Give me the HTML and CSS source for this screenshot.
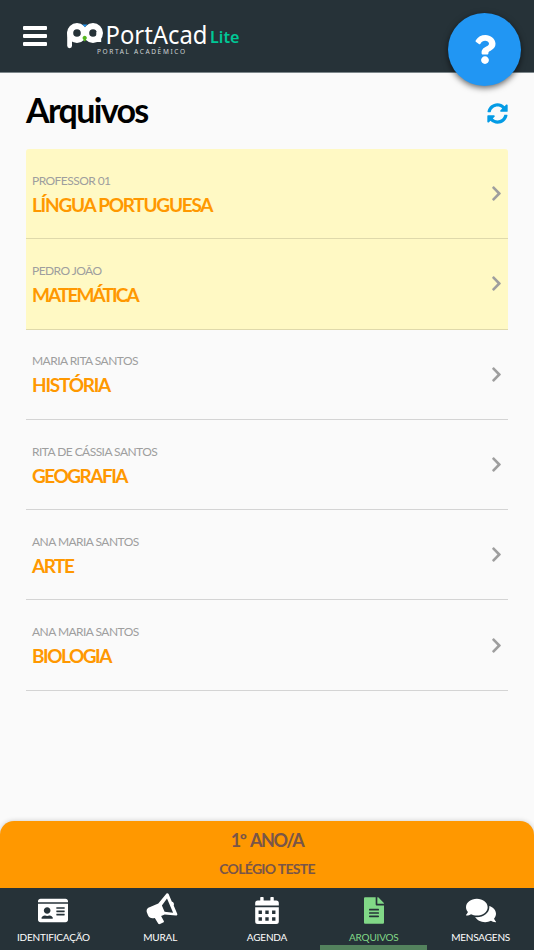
FILE: index.html
```
<!DOCTYPE html>
<html lang="pt-br">
<head>
<meta charset="utf-8">
<meta name="viewport" content="width=device-width, initial-scale=1.0">
<title>PortAcad Lite - Arquivos</title>
<link rel="stylesheet" href="styles.css">
</head>
<body>
<svg class="sprite" width="0" height="0">
  <symbol id="chevron" viewBox="0 0 320 512"><path d="M285.476 272.971L91.132 467.314c-9.373 9.373-24.569 9.373-33.941 0l-22.667-22.667c-9.357-9.357-9.375-24.522-.04-33.901L188.505 256 34.484 101.255c-9.335-9.379-9.317-24.544.04-33.901l22.667-22.667c9.373-9.373 24.569-9.373 33.941 0L285.475 239.03c9.373 9.372 9.373 24.568.001 33.941z"/></symbol>
</svg>

<header class="topbar">
  <svg class="menu" viewBox="0 0 24 20"><rect width="24" height="4" rx="1"/><rect y="8" width="24" height="4" rx="1"/><rect y="16" width="24" height="4" rx="1"/></svg>
  <svg class="logo" viewBox="0 0 176 36">
    <g fill="none" stroke="#fff" stroke-width="6.200">
      <circle cx="10" cy="12" r="6.900"/>
      <circle cx="26" cy="12" r="6.900"/>
      <path d="M2.600 12v12.800" stroke-width="4.800" stroke-linecap="round"/>
      <path d="M31.800 11v10" stroke-width="4.800"/>
    </g>
    <path d="M15.300 3.500h5l-2.500 2.500z" fill="#2196f3"/>
    <path d="M17.700 14.800a2.200 2.200 0 0 1 1.200 4l-.5 1.400h-1.400l-.5-1.400a2.200 2.200 0 0 1 1.200-4z" fill="#55b51f"/>
    <text class="logo-name" x="38.500" y="22.700" textLength="102" lengthAdjust="spacingAndGlyphs">PortAcad</text>
    <text class="logo-lite" x="143" y="22" textLength="29.500" lengthAdjust="spacingAndGlyphs">Lite</text>
    <text class="logo-sub" x="30" y="32.500" textLength="88">PORTAL ACADÊMICO</text>
  </svg>
  <button class="help" aria-label="Ajuda">
    <svg viewBox="0 0 384 512"><path d="M202.021 0C122.202 0 70.503 32.703 29.914 91.026c-7.363 10.580-5.093 25.086 5.178 32.874l43.138 32.709c10.373 7.865 25.132 6.026 33.253-4.148 25.049-31.381 43.630-49.449 82.757-49.449 30.764 0 68.816 19.799 68.816 49.631 0 22.552-18.617 34.134-48.993 51.164-35.423 19.860-82.299 44.576-82.299 106.405V320c0 13.255 10.745 24 24 24h72.471c13.255 0 24-10.745 24-24v-5.773c0-42.860 125.268-44.645 125.268-160.627C377.504 66.256 286.902 0 202.021 0zM192 373.459c-38.196 0-69.271 31.075-69.271 69.271 0 38.195 31.075 69.270 69.271 69.270s69.271-31.075 69.271-69.271-31.075-69.270-69.271-69.270z"/></svg>
  </button>
</header>

<main>
  <div class="title-row">
    <h1>Arquivos</h1>
    <svg class="refresh" viewBox="0 0 512 512"><path d="M370.720 133.280C339.458 104.008 298.888 87.962 255.848 88c-77.458.068-144.328 53.178-162.791 126.850-1.344 5.363-6.122 9.150-11.651 9.150H24.103c-7.498 0-13.194-6.807-11.807-14.176C33.933 94.924 134.813 8 256 8c66.448 0 126.791 26.136 171.315 68.685L463.030 40.970C478.149 25.851 504 36.559 504 57.941V192c0 13.255-10.745 24-24 24H345.941c-21.382 0-32.090-25.851-16.971-40.971l41.750-41.749zM32 296h134.059c21.382 0 32.090 25.851 16.971 40.971l-41.750 41.750c31.262 29.273 71.835 45.319 114.876 45.280 77.418-.070 144.315-53.144 162.787-126.849 1.344-5.363 6.122-9.150 11.651-9.150h57.304c7.498 0 13.194 6.807 11.807 14.176C478.067 417.076 377.187 504 256 504c-66.448 0-126.791-26.136-171.315-68.685L48.970 471.030C33.851 486.149 8 475.441 8 454.059V320c0-13.255 10.745-24 24-24z"/></svg>
  </div>

  <div class="list">
    <a class="item new"><div><p class="teacher">PROFESSOR 01</p><h2>LÍNGUA PORTUGUESA</h2></div><svg><use href="#chevron"/></svg></a>
    <a class="item new"><div><p class="teacher">PEDRO JOÃO</p><h2 class="tight">MATEMÁTICA</h2></div><svg><use href="#chevron"/></svg></a>
    <a class="item"><div><p class="teacher">MARIA RITA SANTOS</p><h2>HISTÓRIA</h2></div><svg><use href="#chevron"/></svg></a>
    <a class="item"><div><p class="teacher">RITA DE CÁSSIA SANTOS</p><h2 class="snug">GEOGRAFIA</h2></div><svg><use href="#chevron"/></svg></a>
    <a class="item"><div><p class="teacher">ANA MARIA SANTOS</p><h2 class="snug">ARTE</h2></div><svg><use href="#chevron"/></svg></a>
    <a class="item"><div><p class="teacher">ANA MARIA SANTOS</p><h2 class="snug">BIOLOGIA</h2></div><svg><use href="#chevron"/></svg></a>
  </div>
</main>

<footer>
  <div class="class-info">
    <h3>1º ANO/A</h3>
    <p>COLÉGIO TESTE</p>
  </div>
  <nav>
    <a class="tab">
      <svg width="30" height="27" viewBox="0 0 576 512"><path fill-rule="evenodd" d="M528 32H48C21.500 32 0 53.500 0 80v16h576V80c0-26.500-21.500-48-48-48zM0 432c0 26.500 21.500 48 48 48h480c26.500 0 48-21.500 48-48V128H0v304zm352-232c0-4.400 3.600-8 8-8h144c4.400 0 8 3.600 8 8v16c0 4.400-3.600 8-8 8H360c-4.400 0-8-3.600-8-8v-16zm0 64c0-4.400 3.600-8 8-8h144c4.400 0 8 3.600 8 8v16c0 4.400-3.600 8-8 8H360c-4.400 0-8-3.600-8-8v-16zm0 64c0-4.400 3.600-8 8-8h144c4.400 0 8 3.600 8 8v16c0 4.400-3.600 8-8 8H360c-4.400 0-8-3.600-8-8v-16zM176 192c35.300 0 64 28.700 64 64s-28.700 64-64 64-64-28.700-64-64 28.700-64 64-64zM67.100 396.200C75.500 370.500 99.600 352 128 352h8.200c12.300 5.100 25.700 8 39.800 8s27.600-2.900 39.800-8h8.200c28.400 0 52.500 18.500 60.900 44.200 3.200 9.900-5.200 19.800-15.600 19.800H82.700c-10.400 0-18.800-10-15.600-19.800z"/></svg>
      <span>IDENTIFICAÇÃO</span>
    </a>
    <a class="tab">
      <svg class="horn" width="32" height="32" viewBox="0 0 32 32"><path fill-rule="evenodd" d="M20.500.500c.8-.7 1.700-.3 2.100.6l3.200 7.500c1.700.4 2.600 2.300 1.900 4l3.500 8.200c.4 1-.2 1.900-1.300 1.800l-11.200-1.200-3.600 1.500 2.700 5c.4.8 0 1.400-.7 1.700l-3.100 1.500c-.8.4-1.600 0-2-.8l-3.200-5.400c-3.100.8-5.500.2-6.700-2.300L.9 19.500c-.8-2 .1-4.100 2-4.900l9.400-4zM21 5.500l-5.100 6.900 2.700 6.400 8.500.9z"/></svg>
      <span>MURAL</span>
    </a>
    <a class="tab">
      <svg width="24" height="27" viewBox="0 0 448 512"><path d="M48 64h48V12q0-12 12-12h40q12 0 12 12v52h128V12q0-12 12-12h40q12 0 12 12v52h48q48 0 48 48v48H0v-48q0-48 48-48z"/><path fill-rule="evenodd" d="M0 192h448v272q0 48-48 48H48q-48 0-48-48zM64 256v64h64v-64zM192 256v64h64v-64zM320 256v64h64v-64zM64 384v64h64v-64zM192 384v64h64v-64zM320 384v64h64v-64z"/></svg>
      <span>AGENDA</span>
    </a>
    <a class="tab active">
      <svg width="20" height="27" viewBox="0 0 384 512"><path d="M224 136V0H24C10.700 0 0 10.700 0 24v464c0 13.300 10.700 24 24 24h336c13.300 0 24-10.700 24-24V160H248c-13.200 0-24-10.800-24-24zm64 236c0 6.600-5.400 12-12 12H108c-6.600 0-12-5.400-12-12v-8c0-6.600 5.400-12 12-12h168c6.600 0 12 5.400 12 12v8zm0-64c0 6.600-5.400 12-12 12H108c-6.600 0-12-5.400-12-12v-8c0-6.600 5.400-12 12-12h168c6.600 0 12 5.400 12 12v8zm0-72v8c0 6.600-5.400 12-12 12H108c-6.600 0-12-5.400-12-12v-8c0-6.600 5.400-12 12-12h168c6.600 0 12 5.400 12 12zm96-114.100v6.100H256V0h6.100c6.400 0 12.500 2.500 17 7l97.900 98c4.500 4.500 7 10.600 7 16.900z"/></svg>
      <span>ARQUIVOS</span>
    </a>
    <a class="tab">
      <svg width="30" height="27" viewBox="0 0 576 512"><path d="M416 192c0-88.400-93.100-160-208-160S0 103.600 0 192c0 34.300 14.100 65.900 38 92-13.400 30.200-35.500 54.200-35.800 54.500-2.200 2.300-2.800 5.700-1.500 8.700S4.800 352 8 352c36.600 0 66.900-12.300 88.700-25 32.200 15.700 70.300 25 111.300 25 114.900 0 208-71.600 208-160zm122 220c23.900-26 38-57.700 38-92 0-66.900-53.500-124.200-129.300-148.100.9 6.600 1.300 13.300 1.300 20.100 0 105.900-107.700 192-240 192-10.800 0-21.300-.8-31.700-1.900C207.800 439.600 281.800 480 368 480c41 0 79.100-9.200 111.300-25 21.800 12.700 52.100 25 88.700 25 3.200 0 6.100-1.900 7.300-4.800 1.300-2.900.7-6.300-1.500-8.700-.3-.3-22.400-24.200-35.800-54.500z"/></svg>
      <span>MENSAGENS</span>
    </a>
  </nav>
</footer>
</body>
</html>
```
FILE: styles.css
```
* {
  box-sizing: border-box;
}
body {
  margin: 0;
  height: 950px;
  display: flex;
  flex-direction: column;
  overflow: hidden;
  background: #fafafa;
  font-family: Lato, "Open Sans", sans-serif;
}
h1, h2, h3, p {
  margin: 0;
}
svg {
  fill: currentColor;
  flex-shrink: 0;
}
.sprite {
  position: absolute;
}
.topbar {
  position: relative;
  height: 73px;
  flex-shrink: 0;
  background: #263238;
  color: #fff;
  display: flex;
  align-items: flex-start;
  padding: 21px 23px 0;
  border-bottom: 1px solid #7d878b;
}
.menu {
  width: 24px;
  height: 30px;
}
.logo {
  width: 176px;
  height: 36px;
  margin-left: 20px;
  overflow: visible;
}
.logo-name {
  font: 25.5px "Noto Sans", sans-serif;
}
.logo-lite {
  font: 600 16px "Noto Sans", sans-serif;
  fill: #00c896;
}
.logo-sub {
  font: 6.5px "Noto Sans", sans-serif;
  fill: #cfd4d6;
}
/* floating help button hangs over the bar */
.help {
  position: absolute;
  top: 13px;
  right: 13px;
  width: 73px;
  height: 73px;
  border: none;
  border-radius: 50%;
  background: #2196f3;
  color: #fff;
  display: flex;
  align-items: center;
  justify-content: center;
  padding: 0;
  box-shadow: 0 2px 6px rgba(0,0,0,0.6);
}
.help svg {
  width: 22px;
  height: 29px;
}
main {
  flex: 1;
  padding: 0 26px;
}
.title-row {
  display: flex;
  justify-content: space-between;
  height: 76px;
  padding-top: 15px;
}
h1 {
  font-size: 34px;
  line-height: 44px;
  letter-spacing: -1.65px;
}
.refresh {
  width: 21px;
  height: 21px;
  margin-top: 15px;
  color: #039be5;
}
.item {
  display: flex;
  align-items: center;
  justify-content: space-between;
  height: 90.3px;
  padding: 0 6px;
  border-bottom: 1px solid #d4d4d4;
}
.item div {
  padding-top: 4px;
}
.item svg {
  width: 11px;
  height: 17px;
  color: #9e9e9e;
}
.new {
  background: #fff9c4;
  border-bottom-color: #dfd9ab;
}
.list .new:first-child {
  border-radius: 3px 3px 0 0;
}
.teacher {
  font-size: 12px;
  line-height: 18px;
  letter-spacing: -0.55px;
  color: #9e9e9e;
}
h2 {
  font-size: 19px;
  line-height: 30px;
  letter-spacing: -1.25px;
  color: #ff9800;
}
.snug {
  letter-spacing: -1.5px;
}
.tight {
  letter-spacing: -1.9px;
}
.class-info {
  height: 67px;
  border-radius: 14px 14px 0 0;
  background: #ff9800;
  color: #795548;
  text-align: center;
  box-shadow: 0 0 5px rgba(0,0,0,0.2);
}
h3 {
  font-size: 18px;
  line-height: 24px;
  padding-top: 7px;
  letter-spacing: -1.4px;
  word-spacing: 2px;
}
.class-info p {
  font-size: 14px;
  font-weight: bold;
  line-height: 20px;
  margin-top: 7px;
  letter-spacing: -0.7px;
}
nav {
  display: grid;
  grid-template-columns: repeat(5, 1fr);
  height: 62px;
  background: #263238;
  color: #fff;
}
.tab {
  display: flex;
  flex-direction: column;
  align-items: center;
  height: 62px;
  font-size: 10px;
  line-height: 14px;
  letter-spacing: -0.2px;
}
.tab svg {
  margin: 9px 0 auto;
}
.tab .horn {
  margin: 5px 0 auto 3px;
}
.tab span {
  margin-bottom: 6px;
}
.active {
  color: #81d887;
  border-bottom: 5px solid #53825d;
}
.active span {
  margin-bottom: 1px;
}
```
